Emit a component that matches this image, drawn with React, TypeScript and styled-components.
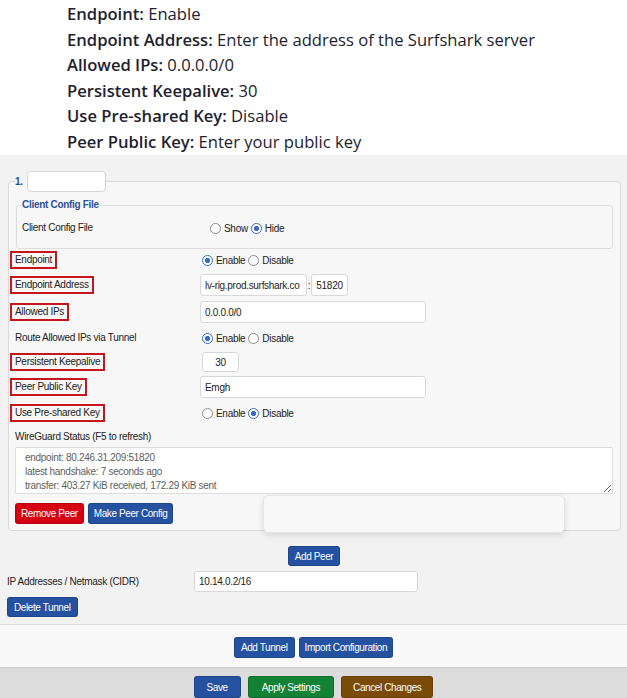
import React from "react";
import styled, { createGlobalStyle } from "styled-components";

const GlobalStyle = createGlobalStyle`
  html, body {
    margin: 0;
    padding: 0;
    background: #ffffff;
  }
  body {
    font-family: "Liberation Sans", Arial, sans-serif;
    overflow: hidden;
  }
`;

const Page = styled.div`
  width: 627px;
  height: 698px;
  overflow: hidden;
  display: flex;
  flex-direction: column;
`;

const Intro = styled.div`
  height: 155px;
  box-sizing: border-box;
  padding: 1px 0 0 67px;
  background: #ffffff;
  font-family: "Open Sans", Lato, sans-serif;
  font-size: 16.6px;
  line-height: 25.6px;
  color: #1e2230;
`;

const IntroKey = styled.strong`
  font-weight: 600;
`;

const Settings = styled.div`
  background: #f2f2f2;
  padding: 16px 6px 7px 7px;
  border-bottom: 1px solid #dddddd;
  font-size: 10px;
  letter-spacing: -0.3px;
  color: #222222;
`;

const TunnelFieldset = styled.fieldset`
  margin: 0 0 0 1px;
  padding: 0 7px 6px 1px;
  border: 1px solid #d9d9d9;
  border-radius: 4px;
  background: #f7f7f7;
  min-width: 0;
`;

const TunnelLegend = styled.legend`
  margin-left: 5px;
  padding: 0;
  color: #2b4f98;
  font-weight: 700;
  line-height: 21px;
`;

const NameInput = styled.input`
  box-sizing: border-box;
  width: 79px;
  height: 21px;
  margin-left: 4px;
  vertical-align: top;
  border: 1px solid #d6d6d6;
  border-radius: 4px;
  background: #ffffff;
`;

const ConfigFieldset = styled.fieldset`
  margin: 7px 0 0 6px;
  padding: 6px 0 9px 0;
  border: 1px solid #dcdcdc;
  border-radius: 3px;
  min-width: 0;
`;

const ConfigLegend = styled.legend`
  margin-left: 5px;
  padding: 0;
  color: #2b4f98;
  font-weight: 700;
  font-size: 10px;
  line-height: 12px;
`;

const FormRow = styled.div<{ $labelWidth?: number; $top?: number; $height?: number }>`
  display: grid;
  grid-template-columns: ${(p) => p.$labelWidth ?? 190}px 1fr;
  align-items: center;
  height: ${(p) => p.$height ?? 22}px;
  margin-top: ${(p) => p.$top ?? 4}px;
`;

const FieldLabel = styled.span<{ $marked?: boolean }>`
  justify-self: start;
  padding: 1px 3px;
  line-height: 12px;
  border: 2px solid ${(p) => (p.$marked ? "#c5161d" : "transparent")};
`;

const RadioGroup = styled.div<{ $offset?: number }>`
  display: flex;
  align-items: center;
  padding-left: ${(p) => p.$offset ?? 2}px;
`;

const RadioOption = styled.label`
  display: inline-flex;
  align-items: center;
  gap: 3px;
  margin-right: 3px;
`;

const RadioDot = styled.span<{ $checked?: boolean }>`
  width: 11px;
  height: 11px;
  box-sizing: border-box;
  border-radius: 50%;
  border: ${(p) => (p.$checked ? "1.5px solid #3a6cc0" : "1px solid #8d8d8d")};
  background: ${(p) =>
    p.$checked
      ? "radial-gradient(circle, #3a6cc0 0 2.4px, #ffffff 2.9px)"
      : "#ffffff"};
`;

const InputGroup = styled.div`
  display: flex;
  align-items: center;
`;

const TextInput = styled.input<{ $width: number; $height?: number; $center?: boolean; $offset?: number }>`
  box-sizing: border-box;
  width: ${(p) => p.$width}px;
  height: ${(p) => p.$height ?? 22}px;
  margin-left: ${(p) => p.$offset ?? 0}px;
  padding: 0 4px;
  border: 1px solid #d8d8d8;
  border-radius: 3px;
  background: #ffffff;
  font-family: inherit;
  font-size: 10px;
  letter-spacing: -0.3px;
  color: #222222;
  text-align: ${(p) => (p.$center ? "center" : "left")};
`;

const Colon = styled.span`
  width: 4px;
  text-align: center;
`;

const StatusLabel = styled.div`
  margin-top: 6px;
  padding-left: 5px;
  line-height: 14px;
`;

const StatusBox = styled.textarea`
  display: block;
  box-sizing: border-box;
  width: 598px;
  height: 47px;
  margin: 3px 0 0 5px;
  padding: 3px 9px 0;
  border: 1px solid #dddddd;
  border-radius: 2px;
  background: #ffffff;
  font-family: inherit;
  font-size: 10px;
  letter-spacing: -0.3px;
  line-height: 14px;
  color: #5e5e5e;
  resize: vertical;
  overflow: hidden;
`;

const ButtonRow = styled.div`
  position: relative;
  display: flex;
  gap: 4px;
  margin: 9px 0 0 5px;
`;

const tones = {
  blue: "#2452a0",
  red: "#d50012",
  green: "#138235",
  brown: "#7a4b07",
};

const Button = styled.button<{ $tone?: keyof typeof tones; $pad?: number; $height?: number }>`
  height: ${(p) => p.$height ?? 21}px;
  padding: 0 ${(p) => p.$pad ?? 5}px;
  border: 1px solid rgba(0, 0, 0, 0.15);
  border-radius: 3px;
  background: ${(p) => tones[p.$tone ?? "blue"]};
  color: #ffffff;
  font-family: inherit;
  font-size: 10px;
  letter-spacing: -0.4px;
  cursor: pointer;
`;

const Popover = styled.div`
  position: absolute;
  left: 248px;
  top: -8px;
  width: 302px;
  height: 38px;
  box-sizing: border-box;
  background: #f8f8f8;
  border: 1px solid #e4e4e4;
  border-radius: 6px;
  box-shadow: 0 2px 6px rgba(0, 0, 0, 0.12);
  z-index: 2;
`;

const CenterRow = styled.div<{ $top?: number }>`
  display: flex;
  justify-content: center;
  margin-top: ${(p) => p.$top ?? 0}px;
`;

const PlainLabel = styled.span`
  line-height: 12px;
`;

const LeftRow = styled.div`
  margin-top: 5px;
`;

const Actions = styled.div`
  display: flex;
  justify-content: center;
  gap: 4px;
  padding: 12px 0 9px;
  background: #f9f9f9;
`;

const Footer = styled.div`
  flex: 1;
  display: flex;
  justify-content: center;
  gap: 7px;
  padding-top: 8px;
  background: #dcdcdc;
  border-top: 1px solid #d2d2d2;
`;

const Radio = ({ label, checked }: { label: string; checked?: boolean }) => (
  <RadioOption>
    <RadioDot $checked={checked} />
    {label}
  </RadioOption>
);

const App: React.FC = () => {
  return (
    <Page>
      <GlobalStyle />
      <Intro>
        <div>
          <IntroKey>Endpoint:</IntroKey> Enable
        </div>
        <div>
          <IntroKey>Endpoint Address:</IntroKey> Enter the address of the Surfshark server
        </div>
        <div>
          <IntroKey>Allowed IPs:</IntroKey> 0.0.0.0/0
        </div>
        <div>
          <IntroKey>Persistent Keepalive:</IntroKey> 30
        </div>
        <div>
          <IntroKey>Use Pre-shared Key:</IntroKey> Disable
        </div>
        <div>
          <IntroKey>Peer Public Key:</IntroKey> Enter your public key
        </div>
      </Intro>

      <Settings>
        <TunnelFieldset>
          <TunnelLegend>
            1.
            <NameInput />
          </TunnelLegend>

          <ConfigFieldset>
            <ConfigLegend>Client Config File</ConfigLegend>
            <FormRow $top={0}>
              <FieldLabel>Client Config File</FieldLabel>
              <RadioGroup $offset={3}>
                <Radio label="Show" />
                <Radio label="Hide" checked />
              </RadioGroup>
            </FormRow>
          </ConfigFieldset>

          <FormRow $top={0}>
            <FieldLabel $marked>Endpoint</FieldLabel>
            <RadioGroup>
              <Radio label="Enable" checked />
              <Radio label="Disable" />
            </RadioGroup>
          </FormRow>

          <FormRow $top={3}>
            <FieldLabel $marked>Endpoint Address</FieldLabel>
            <InputGroup>
              <TextInput $width={107} defaultValue="lv-rig.prod.surfshark.co" />
              <Colon>:</Colon>
              <TextInput $width={37} $center defaultValue="51820" />
            </InputGroup>
          </FormRow>

          <FormRow $top={5}>
            <FieldLabel $marked>Allowed IPs</FieldLabel>
            <TextInput $width={226} defaultValue="0.0.0.0/0" />
          </FormRow>

          <FormRow>
            <FieldLabel>Route Allowed IPs via Tunnel</FieldLabel>
            <RadioGroup>
              <Radio label="Enable" checked />
              <Radio label="Disable" />
            </RadioGroup>
          </FormRow>

          <FormRow $top={3} $height={20}>
            <FieldLabel $marked>Persistent Keepalive</FieldLabel>
            <TextInput $width={37} $height={20} $offset={2} $center defaultValue="30" />
          </FormRow>

          <FormRow>
            <FieldLabel $marked>Peer Public Key</FieldLabel>
            <TextInput $width={226} defaultValue="Emgh" />
          </FormRow>

          <FormRow>
            <FieldLabel $marked>Use Pre-shared Key</FieldLabel>
            <RadioGroup>
              <Radio label="Enable" />
              <Radio label="Disable" checked />
            </RadioGroup>
          </FormRow>

          <StatusLabel>WireGuard Status (F5 to refresh)</StatusLabel>
          <StatusBox
            readOnly
            value={
              "endpoint: 80.246.31.209:51820\nlatest handshake: 7 seconds ago\ntransfer: 403.27 KiB received, 172.29 KiB sent"
            }
          />

          <ButtonRow>
            <Button $tone="red">Remove Peer</Button>
            <Button>Make Peer Config</Button>
            <Popover />
          </ButtonRow>
        </TunnelFieldset>

        <CenterRow $top={15}>
          <Button $height={20} $pad={6}>Add Peer</Button>
        </CenterRow>

        <FormRow $labelWidth={187} $top={5} $height={21}>
          <PlainLabel>IP Addresses / Netmask (CIDR)</PlainLabel>
          <TextInput $width={224} $height={21} defaultValue="10.14.0.2/16" />
        </FormRow>

        <LeftRow>
          <Button $height={20} $pad={6}>
            Delete Tunnel
          </Button>
        </LeftRow>
      </Settings>

      <Actions>
        <Button $pad={6}>Add Tunnel</Button>
        <Button $pad={5}>Import Configuration</Button>
      </Actions>

      <Footer>
        <Button $pad={12} $height={22}>
          Save
        </Button>
        <Button $tone="green" $pad={13} $height={22}>
          Apply Settings
        </Button>
        <Button $tone="brown" $pad={11} $height={22}>
          Cancel Changes
        </Button>
      </Footer>
    </Page>
  );
};

export default App;
